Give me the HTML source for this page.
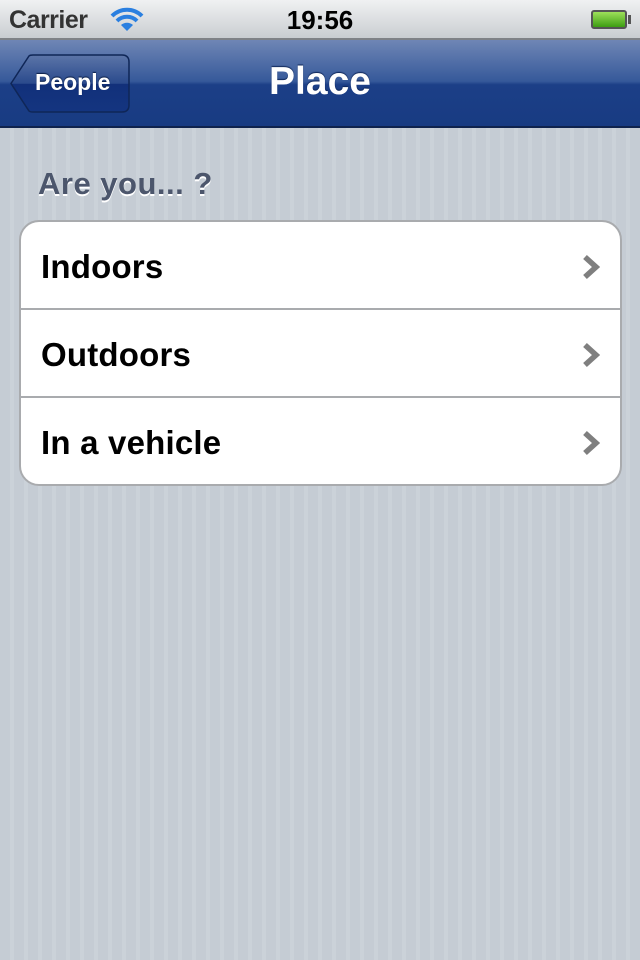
<!DOCTYPE html>
<html><head><style>
*{margin:0;padding:0;box-sizing:border-box}
body{width:640px;height:960px;overflow:hidden;font-family:"Liberation Sans",sans-serif;
background:repeating-linear-gradient(90deg,#c5ccd4 0,#c5ccd4 10px,#cbd2d9 10px,#cbd2d9 14px);position:relative}
.status{position:absolute;top:0;left:0;width:640px;height:40px;background:linear-gradient(#f0f1f2,#c9cdd1);border-bottom:2px solid #7f8287}
.status .c{position:absolute;left:9px;top:6px;font-size:25px;color:#333;font-weight:bold;letter-spacing:-0.5px}
.status .t{position:absolute;left:0;width:640px;text-align:center;top:5px;font-size:26px;font-weight:bold;color:#000}
.nav{position:absolute;top:40px;left:0;width:640px;height:88px;background:linear-gradient(#6f86b5 0%,#36599a 48%,#1c3f87 52%,#183b82 100%);border-bottom:2px solid #0f234d}
.nav .title{position:absolute;width:640px;text-align:center;top:20px;font-size:39px;font-weight:bold;color:#fff;text-shadow:0 -1px 1px #0c2456}
.back{position:absolute;left:10px;top:14px;width:120px;height:59px}
.back span{position:absolute;left:25px;top:15px;font-size:23px;font-weight:bold;color:#fff;text-shadow:0 -1px 1px #0a1d44}
.hdr{position:absolute;left:38px;top:166px;font-size:31px;font-weight:bold;color:#4c566c;text-shadow:0 2px 0 #fff;letter-spacing:0.5px}
.grp{position:absolute;left:19px;top:220px;width:603px;height:266px;background:#fff;border:2px solid #a9abae;border-radius:20px;overflow:hidden}
.row{height:88px;border-bottom:2px solid #a9abae;position:relative}
.row:last-child{border-bottom:none}
.row span{position:absolute;left:20px;top:26px;font-size:33px;font-weight:bold;color:#000;letter-spacing:0.2px}
.row svg{position:absolute;right:20px;top:32px}
</style></head><body>
<div class="status"><span class="c">Carrier</span>
<svg style="position:absolute;left:110px;top:7px" width="34" height="26" viewBox="0 0 34 26"><path d="M17 24 L11 18 A9 9 0 0 1 23 18 Z" fill="#2a7fe0"/><path d="M7 14 A14 14 0 0 1 27 14" stroke="#2a7fe0" stroke-width="4" fill="none"/><path d="M2 9 A21 21 0 0 1 32 9" stroke="#2a7fe0" stroke-width="4" fill="none"/></svg>
<div class="t">19:56</div>
<div style="position:absolute;left:591px;top:10px;width:36px;height:19px;border:2px solid #555;border-radius:3px;background:linear-gradient(#9de05a,#3d9e12)"></div>
<div style="position:absolute;left:628px;top:15px;width:3px;height:9px;background:#555"></div>
</div>
<div class="nav"><div class="title">Place</div>
<svg class="back" viewBox="0 0 120 59"><defs><linearGradient id="g" x1="0" y1="0" x2="0" y2="1"><stop offset="0" stop-color="#5c75a8"/><stop offset=".5" stop-color="#2a4a8c"/><stop offset=".51" stop-color="#12307a"/><stop offset="1" stop-color="#143580"/></linearGradient></defs><path d="M1 29.5 L19 2 Q20 1 23 1 L112 1 Q119 1 119 8 L119 51 Q119 58 112 58 L23 58 Q20 58 19 57 Z" fill="url(#g)" stroke="#0f2657" stroke-width="1.5"/></svg>
<div class="back"><span>People</span></div>
</div>
<div class="hdr">Are you... ?</div>
<div class="grp">
<div class="row"><span>Indoors</span><svg width="18" height="26" viewBox="0 0 18 26"><path d="M3 3 L14 13 L3 23" stroke="#7f7f7f" stroke-width="5.5" fill="none"/></svg></div>
<div class="row"><span>Outdoors</span><svg width="18" height="26" viewBox="0 0 18 26"><path d="M3 3 L14 13 L3 23" stroke="#7f7f7f" stroke-width="5.5" fill="none"/></svg></div>
<div class="row"><span>In a vehicle</span><svg width="18" height="26" viewBox="0 0 18 26"><path d="M3 3 L14 13 L3 23" stroke="#7f7f7f" stroke-width="5.5" fill="none"/></svg></div>
</div>
</body></html>
